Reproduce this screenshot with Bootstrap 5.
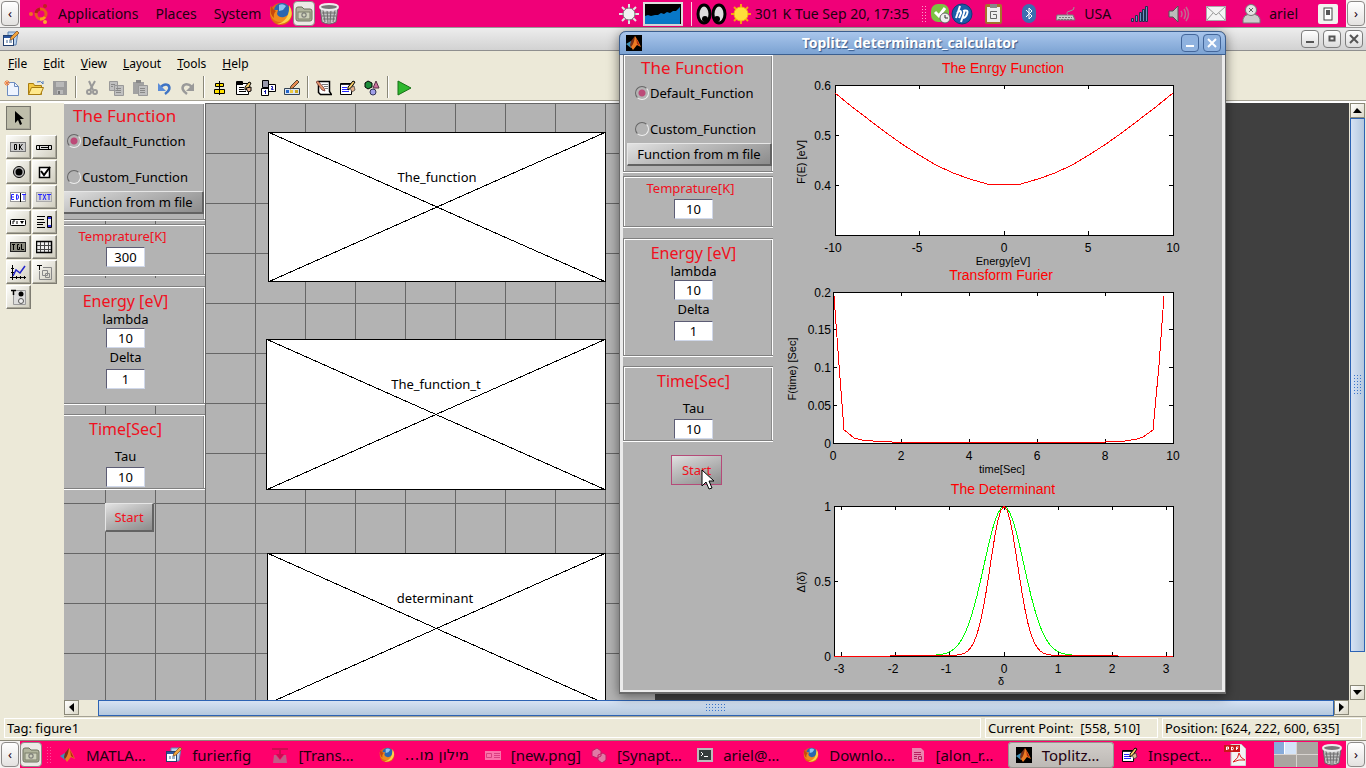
<!DOCTYPE html>
<html lang="en">
<head>
<meta charset="utf-8">
<meta name="viewport" content="width=device-width, initial-scale=1">
<title>Toplitz_determinant_calculator</title>
<link href="https://cdn.jsdelivr.net/npm/bootstrap@5.3.0/dist/css/bootstrap.min.css" rel="stylesheet">
<style>
  :root { --beige:#ece9d8; --gui:#b3b3b3; --edge:#808080; }
  body { height:100vh; overflow:hidden; background:var(--beige); color:#000; font:12px/16px "Noto Sans",sans-serif; }
  svg { display:block; flex:none; }
  button { font:inherit; color:inherit; padding:0; }
  a { color:inherit; text-decoration:none; }

  /* desktop panels */
  .desk { height:27px; background:#f00078; font-size:14px; line-height:20px; color:#210010; flex:none; white-space:nowrap; }
  .desk-low { background:#ff006c; font-size:15px; }
  .desk-item { margin-right:17px; }
  .hide-btn { width:20px; height:27px; background:#f4f2f0; flex:none; border:0; padding:1px; }
  .hide-btn span { display:block; height:25px; line-height:22px; font-size:13px; border:1px solid #8c8a88; border-radius:4px; background:linear-gradient(#fff,#e4e2e0); }
  .lit { width:22px; height:25px; background:#eceae6; border:1px solid #8d8a86; border-radius:4px; }
  .sp4 { margin-left:4px; } .sp8 { margin-left:8px; } .sp12 { margin-left:12px; } .sp20 { margin-left:20px; } .sp24 { margin-left:24px; }
  .dots { width:6px; height:18px; background:radial-gradient(circle,#ff9cca 1px,transparent 1px) 0 0/3px 3px; }
  .task { flex:1 1 0; min-width:0; height:26px; padding-left:8px; gap:10px; border:0; background:none; text-align:left; white-space:nowrap; overflow:hidden; }
  .task.on { background:linear-gradient(#d2ceca,#bcb8b4); border-radius:4px; box-shadow:inset 0 0 0 1px #98948f; }
  .he { font-family:"DejaVu Sans",sans-serif; font-size:15px; }
  .faded { opacity:.6; }
  .tail { width:146px; flex:none; }
  .pager { width:44px; height:25px; display:grid; grid-template-columns:1fr 1fr; gap:1px; background:#d8d4d0; }
  .pager i { background:#a9a5a0; } .pager i:first-child { background:linear-gradient(90deg,#87abda 45%,#fff 45% 50%,#d4e4f8 50%); }

  /* editor window */
  .ed-title { height:24px; background:linear-gradient(#ededed,#d2d2d2); border-top:1px solid #999; border-bottom:1px solid #8f8f8f; padding:0 3px; flex:none; }
  .wbtn { width:18px; height:18px; border:1px solid #7d7d7d; border-radius:4px; background:linear-gradient(#fff,#dcdcdc); display:grid; place-items:center; }
  .ed-menu { height:25px; padding-left:8px; gap:16px; flex:none; }
  .tools { height:27px; border-bottom:2px solid #fff; box-shadow:inset 0 -1px 0 #a5a294; flex:none; }
  .tools button { width:24px; height:24px; display:grid; place-items:center; border:0; background:none; }
  .rule { width:8px; height:22px; background:linear-gradient(90deg,transparent 3px,#8a8878 3px 4px,#fff 4px 5px,transparent 5px); }
  .palette { width:64px; padding:3px 0 0 6px; flex:none; }
  .pal-wrap { display:grid; gap:5px; }
  .palette-grid { display:grid; grid-template-columns:25px 25px; grid-auto-rows:24px; gap:1px; }
  .palette-grid button { border:1px solid #fff; border-right-color:#7e7c72; border-bottom-color:#7e7c72; background:linear-gradient(135deg,#fdfdfa,#cfccbd); display:grid; place-items:center; box-shadow:inset -1px -1px 0 #a9a799; }
  .palette-grid .pick { background:#bebdaa; border-color:#77766c; }
  .board { background:#404040; overflow:hidden; min-height:0; }
  .sheet { width:591px; flex:none; background:linear-gradient(90deg,#666 1px,transparent 1px) 41px 0/50px 50px, linear-gradient(#666 1px,transparent 1px) 0 0/50px 50px, var(--gui); }
  .form-clip { width:142px; overflow:hidden; flex:none; }
  .form-clip .gui { margin-left:-9px; }
  .axes-list { padding:29px 0 0 60px; }
  .axes-list svg + svg { margin-top:57px; }
  .axes-list svg:last-child { margin-top:63px; }
  .axes-list text, .chart text { font-family:"Noto Sans",sans-serif; font-size:13px; text-anchor:middle; }
  .sbtn { width:15px; height:15px; border:1px solid #8a8878; background:linear-gradient(135deg,#fff,#dad7c6); display:grid; place-items:center; flex:none; }
  .hbar { height:17px; flex:none; padding-right:17px; border-bottom:1px solid #a5a294; }
  .thumb { background:linear-gradient(#d6e2f3,#b4c8de); border:1px solid #2c63b4; display:grid; place-items:center; }
  .hbar .thumb { height:16px; margin-left:19px; }
  .vbar { width:17px; flex:none; padding:0 1px; }
  .vbar .thumb { width:15px; margin-bottom:33px; background:linear-gradient(90deg,#d6e2f3,#b4c8de); }
  .grip { background:radial-gradient(circle,#3a75cc 1px,transparent 1px) 0 0/3px 3px; width:22px; height:10px; }
  .vbar .grip { width:9px; height:22px; }
  .status { height:24px; padding:1px 4px 2px; gap:4px; border-bottom:1px solid #8a8878; flex:none; font-size:13px; }
  .status div { border:1px solid #fff; padding:1px 2px; white-space:pre; line-height:17px; }
  .st-a { width:173px; } .st-b { width:200px; }

  /* parameter form, used in the editor and in the running window */
  .gui { width:150px; font-size:13px; }
  .box { background:var(--gui); border:1px solid var(--edge); border-right:0; box-shadow:inset 1px 1px 0 #fff, inset -1px 0 0 #fff, inset -2px 0 0 #8b8b8b, 0 1px 0 #fff; padding-right:10px; display:flex; flex-direction:column; align-items:center; }
  .box h2 { color:#f01020; font-weight:400; font-size:16px; line-height:20px; margin:4px 0 0; }
  .box label { line-height:16px; }
  .box input[type=text] { width:39px; height:20px; padding:0; border:1px solid #d0d8ea; border-top-color:#5c5c74; border-left-color:#5c5c74; text-align:center; font:inherit; background:#fff; }
  .box.b1 { border-top:0; padding:0 0 5px; align-items:stretch; }
  .box.b1 h2 { font-size:17px; line-height:26px; margin:0; padding-left:17px; }
  .opt { height:24px; padding-left:11px; gap:1px; display:flex; align-items:center; }
  .opt + .opt { margin-top:12px; }
  .opt input { appearance:none; width:14px; height:14px; margin:0; border:1px solid #666; border-right-color:#eee; border-bottom-color:#eee; border-radius:50%; }
  .opt input:checked { background:radial-gradient(circle,#bc4a78 3px,transparent 4px); }
  .push { border:1px solid #e6e6e6; border-right:2px solid #636363; border-bottom:2px solid #636363; background:linear-gradient(160deg,#e2e2e2,#c0c0c0 35%,#8c8c8c); }
  .b1 .push { height:23px; margin:2px 1px 0 3px; line-height:18px; }
  .b2 { margin-top:4px; padding-bottom:7px; }
  .box.b2 h2 { font-size:13px; line-height:22px; margin:0 6px 0 0; }
  .veil { background:var(--gui); padding:8px 0 2px; margin-top:3px; }
  .b3 { padding-bottom:14px; } .b3 input { margin:1px 0; } .b3 input:last-child { margin-top:4px; margin-bottom:0; }
  .b4 { margin-top:8px; padding-bottom:1px; } .b4 label { margin-top:9px; } .b4 input { margin-top:3px; }
  .go { width:49px; height:29px; line-height:26px; margin:14px 0 0 50px; color:#f01020; }

  /* running window */
  .win { position:absolute; top:31px; right:140px; width:607px; border:1px solid #6b6b6b; border-width:0 1px 2px; border-radius:7px 7px 0 0; box-shadow:0 2px 12px rgba(0,0,0,.5); background:var(--gui); }
  .win-title { height:24px; border-radius:7px 7px 0 0; background:linear-gradient(#a9c6ec,#7ba2d2); border:1px solid #3c5f8f; margin:0 -1px; color:#fff; font-weight:700; font-size:14px; text-shadow:1px 1px 1px #34588a; padding:0 4px 0 6px; }
  .win-title .wbtn { background:#8fb2df; border-color:#43669a; margin-left:4px; }
  .win-body { border:3px solid #ebebeb; border-top:0; border-bottom-width:2px; }
  .win .go { margin-left:48px; width:51px; border:1px solid #b54a78; height:30px; }
  .pointer { position:absolute; left:81px; top:438px; }
  .chart text { font-family:"Liberation Sans",sans-serif; font-size:12px; }
  .chart .ttl { fill:#f00; font-size:14px; } .chart .ax { font-size:11px; } .chart .r { text-anchor:end; }
  .chart path, .chart polyline, .chart rect { fill:none; stroke:#000; shape-rendering:crispEdges; }
  .chart rect { fill:#fff; }
  .chart .red { stroke:#f00; } .chart .green { stroke:#0f0; }
</style>
</head>
<body class="d-flex flex-column">

<svg width="0" height="0" class="position-absolute" aria-hidden="true">
  <symbol id="fox" viewBox="0 0 24 24"><circle cx="12" cy="12" r="11" fill="#e06a10"/><circle cx="13" cy="9" r="8" fill="#2a66b0"/><path d="M10 3q4-2 7 1l-3 4-4 1z" fill="#8cc4ee"/><path d="M2 4q1 4 4 4l3 0-1 4q2 4 7 3 4-1 5-5 1 8-6 10-9 1-12-6-2-5 0-10z" fill="#f08a1c"/><path d="M20 3q6 9-1 16-5 4-11 3 13-3 12-19z" fill="#fbd24a"/><path d="M2 4q2 4 5 5-3 3-2 7-5-4-3-12z" fill="#c8480c"/></symbol>
  <symbol id="fold" viewBox="0 0 18 16"><path d="M1 3q0-2 2-2h4l2 2h6q2 0 2 2v8q0 2-2 2H3q-2 0-2-2z" fill="#b0b49c" stroke="#6d705e"/><rect x="3" y="6" width="12" height="7" fill="#cdd0ba" stroke="#7b7e6b"/><rect x="7" y="7" width="4" height="4" rx="1" fill="none" stroke="#666"/></symbol>
  <symbol id="bin" viewBox="0 0 20 22"><path d="M1 4l2 15q7 4 14 0l2-15z" fill="#c4c4c4" stroke="#666"/><path d="M4 7l2 12M8 7l1 13M12 7l-1 13M16 7l-2 12M3 10h14M3 13h14M4 16h12" stroke="#6e6e6e" fill="none"/><ellipse cx="10" cy="4" rx="9" ry="3" fill="#777" stroke="#ececec" stroke-width="2"/></symbol>
  <symbol id="mat" viewBox="0 0 16 16"><path d="M0 9l5-3 3 3-3 4z" fill="#3f8fb5"/><path d="M5 6l4-5v8l-4 4-1-3z" fill="#7a3018"/><path d="M9 1q3 4 6 11l-4-2-4 5-2-3q3-3 4-11z" fill="#ee7b22"/><path d="M10 3q2 4 4 8l-3-2z" fill="#b32a10"/></symbol>
  <symbol id="fig" viewBox="0 0 16 16"><path d="M5 1h10l-2 13H5z" fill="#b9d2ee" stroke="#6284b0"/><rect x=".5" y="4.500" width="10" height="10" fill="#fff" stroke="#24406e"/><path d="M1 5h9v2H1z" fill="#2b56a0"/><path d="M3 9h2v3H3zM6 9h3v3H6z" fill="#9cb0c8"/><path d="M7 9l1-3 6-6 2 2-6 6z" fill="#f2a33c" stroke="#7b4a1c" stroke-width=".7"/></symbol>
  <symbol id="sheetpen" viewBox="0 0 16 16"><path d="M.5 3.500h11v11H.5z" fill="#fff" stroke="#000"/><path d="M1 4h10v1H1z" fill="#223"/><path d="M2 7.500h5M2 9.500h7M2 11.500h7" stroke="#22f"/><path d="M8 10V7l5-6 2 1-4 6z" fill="#f8ce6a" stroke="#000"/><path d="M10 8l4-2 1 4-3 2z" fill="#e8b28c" stroke="#333" stroke-width=".7"/></symbol>
</svg>

<header class="desk d-flex align-items-center">
  <button class="hide-btn" aria-label="Hide panel"><span>‹</span></button>
  <svg class="sp8" width="22" height="22" viewBox="0 0 22 22"><circle cx="13" cy="11" r="5" fill="none" stroke="#e85a1c" stroke-width="3"/><path d="M8 10a5 5 0 0 1 4-4" stroke="#b31c14" stroke-width="3" fill="none"/><path d="M17 14a5 5 0 0 1-5 2" stroke="#f8a01c" stroke-width="3" fill="none"/><circle cx="3" cy="11" r="2" fill="#f07020"/><circle cx="17" cy="3" r="2" fill="#c02020"/><circle cx="17" cy="19" r="2" fill="#fba830"/></svg>
  <nav class="d-flex ms-2"><a href="#" class="desk-item">Applications</a><a href="#" class="desk-item">Places</a><a href="#">System</a></nav>
  <svg class="sp8" width="24" height="24"><use href="#fox"/></svg>
  <span class="lit d-grid"><svg class="m-auto" width="18" height="16"><use href="#fold"/></svg></span>
  <svg class="sp4" width="20" height="22"><use href="#bin"/></svg>

  <svg class="ms-auto" width="20" height="20" viewBox="0 0 20 20"><path d="M10 0v20M0 10h20M3 3l14 14M17 3L3 17" stroke="#e4e4e4" stroke-width="2"/><circle cx="10" cy="10" r="6" fill="#f2f2f2" stroke="#777"/></svg>
  <svg class="sp4" width="40" height="24" viewBox="0 0 40 24"><rect x="1" y="1" width="38" height="22" fill="#000" stroke="#ddd" stroke-width="2"/><path d="M2 22v-8l3-1 3 1 4-1 3 0 3-2 3 1 3-2 3 1 3-2 3 0 2-2 2-2v17z" fill="#0878c8"/></svg>
  <svg class="sp8" width="36" height="24" viewBox="-1 -2 36 24"><rect x="-1" y="-2" width="1" height="24" fill="#ffd0e4"/><ellipse cx="12" cy="10" rx="6" ry="9" fill="#ddd" stroke="#000" stroke-width="3"/><ellipse cx="27" cy="10" rx="6" ry="9" fill="#ddd" stroke="#000" stroke-width="3"/><circle cx="13" cy="15" r="3"/><circle cx="25" cy="15" r="3"/></svg>
  <svg class="sp4" width="20" height="20" viewBox="0 0 20 20"><path d="M10 0v20M0 10h20M3 3l14 14M17 3L3 17" stroke="#f8a010" stroke-width="2"/><circle cx="10" cy="10" r="7" fill="#ffdf3a" stroke="#f4b414"/></svg>
  <span class="sp4">301 K</span><span class="sp4">Tue Sep 20, 17:35</span>
  <i class="dots sp12"></i>
  <svg class="sp4" width="20" height="20" viewBox="0 0 20 20"><rect width="18" height="18" rx="7" fill="#7cc242"/><path d="M4 8l4 4 6-8" stroke="#fff" stroke-width="3" fill="none"/><circle cx="14" cy="14" r="5" fill="#eee" stroke="#666"/><path d="M14 11v3h3" stroke="#333" fill="none"/></svg>
  <svg width="22" height="22" viewBox="0 0 22 22"><circle cx="11" cy="11" r="10" fill="#1a5ca8" stroke="#0d3c78"/><path d="M9 3L5 15M6 10q4-4 4 0l-2 5M14 7l-4 12M12 8q6-2 4 3-1 4-5 4" stroke="#fff" stroke-width="2" fill="none"/></svg>
  <svg class="sp12" width="17" height="20" viewBox="0 0 17 20"><rect width="17" height="20" rx="2" fill="#a5742c"/><rect x="2" y="3" width="13" height="15" fill="#eee"/><rect x="5" width="7" height="4" fill="#888"/><path d="M12 7.500H5.500v7h6v-4H8" stroke="#666" fill="none"/></svg>
  <svg class="sp20" width="14" height="19" viewBox="0 0 14 19"><rect width="14" height="19" rx="7" fill="#3c6eb0"/><path d="M4 6l6 6-3 3V4l3 3-6 6" stroke="#fff" fill="none"/></svg>
  <svg class="sp20" width="20" height="14" viewBox="0 0 20 14"><path d="M1 8h16l2 5H0z" fill="#ccc" stroke="#777"/><path d="M3 10.500h13M2 12.500h15" stroke="#777" stroke-dasharray="2 1"/><path d="M12 8q-3-3 2-4t4-4" stroke="#999" fill="none"/></svg>
  <span class="sp8">USA</span>
  <svg class="sp20" width="17" height="16" viewBox="0 0 17 16"><path d="M.5 12.500h2v3h-2zM4.500 9.500h2v6h-2zM8.500 6.500h2v9h-2zM11.500 3.500h2v12h-2zM14.500.5h2v15h-2z" fill="#6e8ec4" stroke="#20304e"/></svg>
  <svg class="sp20" width="22" height="18" viewBox="0 0 22 18"><path d="M1 6h4l5-5v16l-5-5H1z" fill="#bbb" stroke="#555"/><path d="M13 6q2 3 0 6M16 4q3 5 0 10M18 2q5 7 0 14" stroke="#c06a90" stroke-width="1.500" fill="none"/></svg>
  <svg class="ms-3" width="20" height="15" viewBox="0 0 20 15"><rect x=".5" y=".5" width="19" height="14" fill="#f4f4f4" stroke="#aaa"/><path d="M1 1l9 8 9-8M1 14l6-7M19 14l-6-7" stroke="#999" fill="none"/></svg>
  <svg class="ms-3" width="19" height="20" viewBox="0 0 19 20"><path d="M1 19v-4q1-4 6-5h5q5 1 6 5v4z" fill="#ccc" stroke="#777"/><circle cx="9" cy="6" r="5.500" fill="#e4e4e4" stroke="#777"/><path d="M7 4l4 4M11 4L7 8" stroke="#666"/></svg>
  <span class="sp8">ariel</span>
  <svg class="sp20" width="20" height="20" viewBox="0 0 20 20"><rect width="20" height="20" rx="2" fill="#f2f2f0"/><rect x="6" y="4" width="8" height="12" fill="#fff" stroke="#444"/><rect x="8" y="6" width="4" height="5" fill="#555"/></svg>
  <button class="hide-btn sp8" aria-label="Hide panel"><span>›</span></button>
</header>

<div class="ed-title d-flex align-items-center gap-1">
  <svg class="me-auto" width="16" height="16"><use href="#fig"/></svg>
  <button class="wbtn" aria-label="Minimize"><svg width="10" height="10"><path d="M1 8h8" stroke="#555" stroke-width="2"/></svg></button>
  <button class="wbtn" aria-label="Maximize"><svg width="8" height="8"><rect x="1.500" y="1.500" width="5" height="4" fill="none" stroke="#555" stroke-width="2"/></svg></button>
  <button class="wbtn" aria-label="Close"><svg width="10" height="10"><path d="M1 1l8 8M9 1L1 9" stroke="#555" stroke-width="2"/></svg></button>
</div>
<nav class="ed-menu d-flex align-items-center"><a href="#"><u>F</u>ile</a><a href="#"><u>E</u>dit</a><a href="#"><u>V</u>iew</a><a href="#"><u>L</u>ayout</a><a href="#"><u>T</u>ools</a><a href="#"><u>H</u>elp</a></nav>
<div class="tools d-flex">
  <button aria-label="New"><svg width="16" height="16"><path d="M3.500 2.500h7l4 4v9h-11z" fill="#eef4ff" stroke="#6d8cc0"/><path d="M10.500 2.500v4h4" fill="none" stroke="#6d8cc0"/><path d="M3 0v6M0 3h6M1 1l4 4M5 1L1 5" stroke="#f08040"/></svg></button>
  <button aria-label="Open"><svg width="16" height="16"><path d="M.5 3.500h5l1 2h7v9H.5z" fill="#f4c842" stroke="#a87c10"/><path d="M3.500 7.500h12l-3 7H.5z" fill="#ffe98c" stroke="#a87c10"/><path d="M9 2q4-2 6 2v-3" stroke="#4a78c0" fill="none"/></svg></button>
  <button aria-label="Save"><svg width="16" height="16"><path d="M1 1h14v14H1z" fill="#9b9b9b"/><path d="M4 2h8v5H4zM5 10h6v4H5z" fill="#b9b9b9"/><path d="M6 11h2v3H6z" fill="#777"/></svg></button>
  <span class="rule"></span>
  <button aria-label="Cut"><svg width="16" height="16"><path d="M5 1l4 9M11 1L6 10" stroke="#999" stroke-width="2"/><circle cx="5" cy="12" r="2" fill="none" stroke="#999" stroke-width="2"/><circle cx="11" cy="12" r="2" fill="none" stroke="#999" stroke-width="2"/></svg></button>
  <button aria-label="Copy"><svg width="16" height="16"><path d="M1.500 1.500h8v9h-8zM6.500 5.500h9v10h-9z" fill="#c0c0c0" stroke="#999"/><path d="M8 8.500h5M8 10.500h5M8 12.500h5M3 4.500h4M3 6.500h2" stroke="#888"/></svg></button>
  <button aria-label="Paste"><svg width="16" height="16"><path d="M1 2h11v12H1z" fill="#a2a2a2"/><path d="M4 0h5v3H4z" fill="#888"/><path d="M6.500 5.500h9v10h-9z" fill="#c0c0c0" stroke="#999"/><path d="M8 8.500h5M8 10.500h5M8 12.500h5" stroke="#888"/></svg></button>
  <button aria-label="Undo"><svg width="16" height="16"><path d="M4 8q4-5 8-3 4 4-3 9" stroke="#3f74c4" stroke-width="2.500" fill="none"/><path d="M2 3v8h8z" fill="#5a8cd8"/></svg></button>
  <button aria-label="Redo"><svg width="16" height="16"><path d="M12 7q-4-4-8-2-4 4 3 9" stroke="#9a9a9a" stroke-width="2.500" fill="none"/><path d="M14 3v8H6z" fill="#9a9a9a"/></svg></button>
  <span class="rule"></span>
  <button aria-label="Align"><svg width="16" height="16"><path d="M7.500 1v14" stroke="#000"/><path d="M3.500 3.500h8v3h-8zM2.500 9.500h10v4h-10z" fill="#ffe000" stroke="#000"/><path d="M7.500 4v10" stroke="#000"/></svg></button>
  <button aria-label="Menu editor"><svg width="16" height="16"><path d="M.5 1.500h6v2h6v11H.5z" fill="#fff" stroke="#000"/><path d="M1 2h6v3H1z"/><path d="M3 7.500h5M3 9.500h5M3 11.500h7" stroke="#000"/><path d="M9 10V7l4-5 2 1-3 6z" fill="#f8ce6a" stroke="#000"/><path d="M10 8l5-1v4l-3 1z" fill="#e8b28c" stroke="#000"/></svg></button>
  <button aria-label="Tab order"><svg width="16" height="16"><path d="M2.500.5h6v7h-6z" fill="#99a" stroke="#000"/><path d="M8.500 4.500h7v7h-7zM1.500 8.500h7v7h-7z" fill="#fff" stroke="#000"/><path d="M5.500 10v4M4 11.500h1M11 6.500h1.500v2h-1v1h2" stroke="#11a" fill="none"/></svg></button>
  <button aria-label="Toolbar editor"><svg width="16" height="16"><path d="M.5 8.500h15v6H.5z" fill="#dbe5f2" stroke="#345"/><path d="M2 10h3v3H2z" fill="#26c"/><path d="M6 10h3v3H6z" fill="#ec4"/><path d="M11 10h3v3h-3z" fill="#ca2"/><path d="M6 9l1-3 6-6 2 2-6 6z" fill="#e88a50" stroke="#543"/></svg></button>
  <span class="rule"></span>
  <button aria-label="M-file editor"><svg width="16" height="16"><path d="M2.500 1.500h11v10l2 3h-11l-2-2z" fill="#fff" stroke="#000" stroke-width="1.500"/><path d="M6 4.500h6M8 6.500h4M9 8.500h3" stroke="#777"/><path d="M0 2l2-1 6 7 1 3-3-1z" fill="#e69a70" stroke="#622" stroke-width=".7"/></svg></button>
  <button aria-label="Property inspector"><svg width="16" height="16"><use href="#sheetpen"/></svg></button>
  <button aria-label="Object browser"><svg width="16" height="16"><path d="M1 3l3-2 4 2v4L4 9 1 7z" fill="#1d8c3a" stroke="#000"/><path d="M12 1l3 7H9z" fill="#d070a0" stroke="#534"/><circle cx="9" cy="12" r="3" fill="#a0a0e8" stroke="#335"/></svg></button>
  <span class="rule"></span>
  <button aria-label="Run"><svg width="16" height="16"><path d="M2 1l13 7-13 7z" fill="#2eb82e" stroke="#167016"/></svg></button>
</div>

<main class="d-flex flex-grow-1 overflow-hidden">
  <aside class="palette"><div class="pal-wrap">
    <div class="palette-grid"><button class="pick" aria-label="Select"><svg width="12" height="16"><path d="M2 1v12l3-3 2 5 2-1-2-5h4z"/></svg></button></div>
    <div class="palette-grid">
      <button aria-label="Push button"><svg width="17" height="14"><rect x=".5" y="2.500" width="15" height="9" fill="#ccc" stroke="#777"/><path d="M4.500 4.500h2v5h-2zM9.500 4v6M12.500 4L10 7l2.500 3" stroke="#000" fill="none"/></svg></button>
      <button aria-label="Slider"><svg width="17" height="14"><path d="M.5 5.500h15v4H.5z" fill="#ddd" stroke="#000"/><path d="M3.500 5v5M12.500 5v5M5 7.500h7" stroke="#000"/></svg></button>
      <button aria-label="Radio button"><svg width="14" height="14"><circle cx="7" cy="7" r="5.500" fill="#bbb" stroke="#000"/><circle cx="7" cy="7" r="3.500"/></svg></button>
      <button aria-label="Check box"><svg width="14" height="14"><path d="M1.500 2.500h10v10h-10z" fill="#fff" stroke="#000" stroke-width="1.500"/><path d="M3 6l3 4 6-8" stroke="#000" stroke-width="2" fill="none"/></svg></button>
      <button aria-label="Edit text"><svg width="17" height="14"><rect x=".5" y="2.500" width="15" height="9" fill="#fff" stroke="#999"/><path d="M4 4.500H1.500v5H4M2 7h2M6.500 4.500v5q2 0 2-2.500t-2-2.500M12 4.500h4M14 4v6" stroke="#22f" fill="none"/><path d="M10.500 3v9" stroke="#000"/></svg></button>
      <button aria-label="Static text"><svg width="17" height="14"><rect x=".5" y="2.500" width="15" height="9" fill="#d4d4d4" stroke="#aaa"/><path d="M2 4.500h4M4 4v6M7 4l3 6M10 4L7 10M11 4.500h4M13 4v6" stroke="#22f"/></svg></button>
      <button aria-label="Pop-up menu"><svg width="17" height="14"><rect x=".5" y="4.500" width="15" height="6" rx="1" fill="#fff" stroke="#000"/><path d="M3 9V6h2M7 6v3" stroke="#000" fill="none"/><path d="M10 6h4l-2 3z"/></svg></button>
      <button aria-label="Listbox"><svg width="17" height="14"><path d="M1 1.500h8M1 4.500h7M1 7.500h8M1 9.500h6M1 12.500h8" stroke="#000"/><path d="M11.500 1.500h4v11h-4z" fill="#eee" stroke="#000"/><path d="M12 2h3v2h-3zM12 10h3v2h-3z" fill="#33d"/></svg></button>
      <button aria-label="Toggle button"><svg width="17" height="14"><rect x=".5" y="2.500" width="15" height="9" fill="#8c8c80" stroke="#222"/><path d="M2 4.500h3M3.500 4v6M9 4.500H7.500v5h2V7M11.500 4v5.500H14" stroke="#000" fill="none"/></svg></button>
      <button aria-label="Table"><svg width="17" height="14"><path d="M.5 1.500h15v11H.5z" fill="#eee" stroke="#000" stroke-width="1.500"/><path d="M1 5.500h14M1 9.500h14M4.500 2v10M8.500 2v10M12.500 2v10" stroke="#444"/></svg></button>
      <button aria-label="Axes"><svg width="17" height="17"><path d="M2.500 1v15M0 13.500h16M6.500 12v3M10.500 12v3M14.500 12v3M1 4.500h3M1 8.500h3" stroke="#000"/><path d="M3 12l3-6 4 3 5-7" stroke="#22c" stroke-width="1.500" fill="none"/></svg></button>
      <button aria-label="Panel"><svg width="17" height="17"><path d="M7 3.500h8.500v12h-12V7" stroke="#888" fill="none"/><path d="M1 1.500h5M3.500 1v5" stroke="#000"/><path d="M6.500 6.500h5v5h-5zM9.500 9.500h4v4h-4z" stroke="#888" fill="none"/></svg></button>
      <button aria-label="Button group"><svg width="17" height="17"><path d="M6 1.500h9.500v14h-12V6" stroke="#999" fill="#ddd"/><path d="M1 1.500h5M3.500 1v5" stroke="#000" stroke-width="1.500"/><circle cx="11" cy="5" r="2.500"/><circle cx="11" cy="12" r="2.500" fill="#eee" stroke="#555"/></svg></button>
    </div>
  </div></aside>

  <div class="d-flex flex-column flex-grow-1 overflow-hidden">
    <div class="d-flex flex-grow-1 overflow-hidden">
      <div class="board flex-grow-1"><div class="sheet d-flex h-100">
        <div class="form-clip">
          <form class="gui">
            <section class="box b1"><h2>The Function</h2>
              <div class="opt"><input type="radio" name="ef" id="e1" checked><label for="e1">Default_Function</label></div>
              <div class="opt"><input type="radio" name="ef" id="e2"><label for="e2">Custom_Function</label></div>
              <button type="button" class="push">Function from m file</button></section>
            <section class="box b2"><h2><label for="e3">Temprature[K]</label></h2><input type="text" id="e3" value="300"></section>
            <div class="veil"><section class="box b3"><h2>Energy [eV]</h2><label for="e4">lambda</label><input type="text" id="e4" value="10"><label for="e5">Delta</label><input type="text" id="e5" value="1"></section></div>
            <section class="box b4"><h2>Time[Sec]</h2><label for="e6">Tau</label><input type="text" id="e6" value="10"></section>
            <button type="button" class="push go">Start</button>
          </form>
        </div>
        <div class="axes-list">
          <svg width="341" height="150" viewBox="0 0 341 150"><rect x="2.500" y=".5" width="337" height="149" fill="#fff" stroke="#000"/><path d="M2 0l338 150M340 0L2 150" stroke="#000" shape-rendering="crispEdges"/><text x="171" y="50">The_function</text></svg>
          <svg width="341" height="151" viewBox="0 0 341 151"><rect x=".5" y=".5" width="339" height="150" fill="#fff" stroke="#000"/><path d="M0 0l340 151M340 0L0 151" stroke="#000" shape-rendering="crispEdges"/><text x="170" y="50">The_function_t</text></svg>
          <svg width="341" height="151" viewBox="0 0 341 151"><rect x="1.500" y=".5" width="338" height="150" fill="#fff" stroke="#000"/><path d="M1 0l339 151M340 0L1 151" stroke="#000" shape-rendering="crispEdges"/><text x="169" y="50">determinant</text></svg>
        </div>
      </div></div>
      <div class="vbar d-flex flex-column">
        <button class="sbtn" aria-label="Up"><svg width="9" height="5"><path d="M0 5l4-5 5 5z"/></svg></button>
        <div class="thumb flex-grow-1"><i class="grip"></i></div>
        <button class="sbtn" aria-label="Down"><svg width="9" height="5"><path d="M0 0l4 5 5-5z"/></svg></button>
      </div>
    </div>
    <div class="hbar d-flex">
      <button class="sbtn" aria-label="Left"><svg width="5" height="9"><path d="M5 0L0 4l5 5z"/></svg></button>
      <div class="thumb flex-grow-1"><i class="grip"></i></div>
      <button class="sbtn" aria-label="Right"><svg width="5" height="9"><path d="M0 0l5 4-5 5z"/></svg></button>
    </div>
  </div>
</main>

<div class="status d-flex"><div class="flex-grow-1">Tag: figure1</div><div class="st-a">Current Point:  [558, 510]</div><div class="st-b">Position: [624, 222, 600, 635]</div></div>

<footer class="desk desk-low d-flex align-items-center">
  <button class="hide-btn" aria-label="Hide panel"><span>‹</span></button>
  <span class="lit d-grid"><svg class="m-auto" width="18" height="16"><use href="#fold"/></svg></span>
  <i class="dots sp4 opacity-50"></i>
  <button class="task d-flex align-items-center"><svg width="16" height="16"><use href="#mat"/></svg>MATLA…</button>
  <button class="task d-flex align-items-center"><svg width="16" height="16"><use href="#fig"/></svg>furier.fig</button>
  <button class="task d-flex align-items-center"><svg class="faded" width="16" height="16"><path d="M0 1h16v2H9v4h3l-4 5-4-5h3V3H0z" fill="#b01040"/><path d="M2 8h2l4 5 4-5h2l1 8H1z" fill="#999"/></svg>[Trans…</button>
  <button class="task d-flex align-items-center"><svg width="16" height="16"><use href="#fox"/></svg><span class="he" dir="rtl" lang="he">מילון מו…</span></button>
  <button class="task d-flex align-items-center"><svg class="faded" width="16" height="16"><path d="M0 4h16v9H0z" fill="#f8c0d4"/><path d="M1.500 6.500h5v4h-5zM9 6.500h6M9 8.500h6M9 10.500h6" stroke="#c06a90" fill="none"/></svg>[new.png]</button>
  <button class="task d-flex align-items-center"><svg class="faded" width="16" height="16"><path d="M1 4l5-3 4 3v5l-4 2-5-2zM7 8l5-2 3 2v5l-4 3-4-3z" fill="#ccc" stroke="#a03060"/></svg>[Synapt…</button>
  <button class="task d-flex align-items-center"><svg width="16" height="16"><rect x="1" y="2" width="14" height="12" fill="#343c3c" stroke="#bbb" stroke-width="2"/><path d="M4 5l2 2-2 2M7 9.500h4" stroke="#fff" fill="none"/></svg>ariel@…</button>
  <button class="task d-flex align-items-center"><svg width="16" height="16"><use href="#fox"/></svg>Downlo…</button>
  <button class="task d-flex align-items-center"><svg class="faded" width="16" height="16"><path d="M2 1h9l3 3v11H2z" fill="#ddd"/><path d="M4 5.500h7M4 7.500h7M4 9.500h3M4 11.500h3M8.500 9.500h3v3h-3z" stroke="#835" fill="none"/></svg>[alon_r…</button>
  <button class="task on d-flex align-items-center"><svg width="16" height="16"><rect width="16" height="16"/><use href="#mat"/></svg>Toplitz…</button>
  <button class="task d-flex align-items-center"><svg width="16" height="16"><use href="#sheetpen"/></svg>Inspect…</button>
  <div class="tail d-flex align-items-center">
    <svg class="sp4" width="22" height="22" viewBox="0 0 22 22"><path d="M7 0h10l5 5v17H7z" fill="#f4f4f4" stroke="#bbb"/><path d="M0 1h16v7H0z" fill="#c81818"/><path d="M2.500 6V3h2v2h-2M7.500 3v3q2 0 2-1.500T7.500 3M12.500 6V3h2M12 4.500h2" stroke="#fff" fill="none"/><path d="M9 18q6-4 6-9 1 5 6 7-6-1-12 2z" stroke="#d22" fill="none"/></svg>
    <div class="pager ms-auto"><i></i><i></i><i></i><i></i></div>
    <svg class="sp4" width="20" height="22"><use href="#bin"/></svg>
    <button class="hide-btn sp4" aria-label="Hide panel"><span>›</span></button>
  </div>
</footer>

<section class="win">
  <div class="win-title d-flex align-items-center"><svg width="16" height="16"><rect width="16" height="16"/><use href="#mat"/></svg><span class="flex-grow-1 text-center">Toplitz_determinant_calculator</span>
    <button class="wbtn" aria-label="Minimize"><svg width="10" height="10"><path d="M1 8h8" stroke="#fff" stroke-width="2"/></svg></button>
    <button class="wbtn" aria-label="Close"><svg width="10" height="10"><path d="M1 1l8 8M9 1L1 9" stroke="#fff" stroke-width="2"/></svg></button>
  </div>
  <div class="win-body d-flex">
    <form class="gui flex-shrink-0">
      <section class="box b1"><h2>The Function</h2>
        <div class="opt"><input type="radio" name="wf" id="w1" checked><label for="w1">Default_Function</label></div>
        <div class="opt"><input type="radio" name="wf" id="w2"><label for="w2">Custom_Function</label></div>
        <button type="button" class="push">Function from m file</button></section>
      <section class="box b2"><h2><label for="w3">Temprature[K]</label></h2><input type="text" id="w3" value="10"></section>
      <div class="veil"><section class="box b3"><h2>Energy [eV]</h2><label for="w4">lambda</label><input type="text" id="w4" value="10"><label for="w5">Delta</label><input type="text" id="w5" value="1"></section></div>
      <section class="box b4"><h2>Time[Sec]</h2><label for="w6">Tau</label><input type="text" id="w6" value="10"></section>
      <button type="button" class="push go">Start</button>
    </form>
    <div class="d-flex flex-column">
      <svg class="chart" width="449" height="212" viewBox="773 55 449 212">
        <text class="ttl" x="1003" y="73">The Enrgy Function</text>
        <rect x="835.500" y="85.500" width="338" height="150"/>
        <path d="M919.500 85v4M1004.500 85v4M1088.500 85v4M919.500 235v-4M1004.500 235v-4M1088.500 235v-4M835 135.500h4M835 185.500h4M1173 135.500h-4M1173 185.500h-4"/>
        <polyline class="red" points="835,93 851,106 868,119 885,132 902,144 919,155 936,165 953,173 970,179 987,184 1004,185 1021,184 1038,179 1055,173 1072,165 1089,155 1106,144 1123,132 1140,119 1157,106 1173,93"/>
        <text class="r" x="831" y="90">0.6</text><text class="r" x="831" y="140">0.5</text><text class="r" x="831" y="190">0.4</text>
        <text x="833" y="252">-10</text><text x="917" y="252">-5</text><text x="1004" y="252">0</text><text x="1088" y="252">5</text><text x="1173" y="252">10</text>
        <text class="ax" x="1003" y="265">Energy[eV]</text><text class="ax" transform="translate(805 162) rotate(-90)">F(E) [eV]</text>
      </svg>
      <svg class="chart" width="449" height="210" viewBox="773 267 449 210">
        <text class="ttl" x="1001" y="280">Transform Furier</text>
        <rect x="833.500" y="292.500" width="340" height="151"/>
        <path d="M901.500 292v4M969.500 292v4M1037.500 292v4M1105.500 292v4M901.500 443v-4M969.500 443v-4M1037.500 443v-4M1105.500 443v-4M833 329.500h4M833 367.500h4M833 405.500h4M1173 329.500h-4M1173 367.500h-4M1173 405.500h-4"/>
        <polyline class="red" points="834,296 839,365 844,430 848,433 854,438 862,440 873,441 892,442 1105,442 1125,441 1137,439 1143,437 1153,430 1159,365 1164,296"/>
        <text class="r" x="831" y="297">0.2</text><text class="r" x="831" y="334">0.15</text><text class="r" x="831" y="372">0.1</text><text class="r" x="831" y="410">0.05</text><text class="r" x="831" y="448">0</text>
        <text x="833" y="460">0</text><text x="901" y="460">2</text><text x="969" y="460">4</text><text x="1037" y="460">6</text><text x="1105" y="460">8</text><text x="1173" y="460">10</text>
        <text class="ax" x="1002" y="473">time[Sec]</text><text class="ax" transform="translate(796 369) rotate(-90)">F(time) [Sec]</text>
      </svg>
      <svg class="chart" width="449" height="213" viewBox="773 477 449 213">
        <text class="ttl" x="1003" y="494">The Determinant</text>
        <rect x="834.500" y="506.500" width="339" height="150"/>
        <path d="M841.500 506v4M895.500 506v4M949.500 506v4M1004.500 506v4M1058.500 506v4M1112.500 506v4M1166.500 506v4M841.500 656v-4M895.500 656v-4M949.500 656v-4M1004.500 656v-4M1058.500 656v-4M1112.500 656v-4M1166.500 656v-4M834 581.500h4M1173 581.500h-4"/>
        <polyline class="green" id="wide"/><polyline class="red" id="slim"/>
        <path class="red" d="M834 656.500h56M1119 656.500h54"/>
        <text class="r" x="831" y="511">1</text><text class="r" x="831" y="586">0.5</text><text class="r" x="831" y="661">0</text>
        <text x="839" y="673">-3</text><text x="893" y="673">-2</text><text x="946" y="673">-1</text><text x="1004" y="673">0</text><text x="1058" y="673">1</text><text x="1112" y="673">2</text><text x="1166" y="673">3</text>
        <text class="ax" x="1001" y="685">δ</text><text class="ax" transform="translate(805 582) rotate(-90)">Δ(δ)</text>
      </svg>
    </div>
  </div>
  <svg class="pointer" width="14" height="22" viewBox="0 0 14 22"><path d="M1 1v16l4-4 3 7 3-1-3-7h5z" fill="#fff" stroke="#000"/></svg>
</section>

<script>
  // bell curves of the determinant plot: sigma and half-width in pixels
  function bell(id, sigma, half) {
    let p = [];
    for (let d = -half; d <= half; d += 3) p.push((1004 + d) + ',' + (655.5 - 149 * Math.exp(-d * d / (2 * sigma * sigma))).toFixed(1));
    document.getElementById(id).setAttribute('points', p.join(' '));
  }
  bell('wide', 20, 114);
  bell('slim', 13.7, 114);
</script>
<script src="https://cdn.jsdelivr.net/npm/bootstrap@5.3.0/dist/js/bootstrap.bundle.min.js"></script>
</body>
</html>
